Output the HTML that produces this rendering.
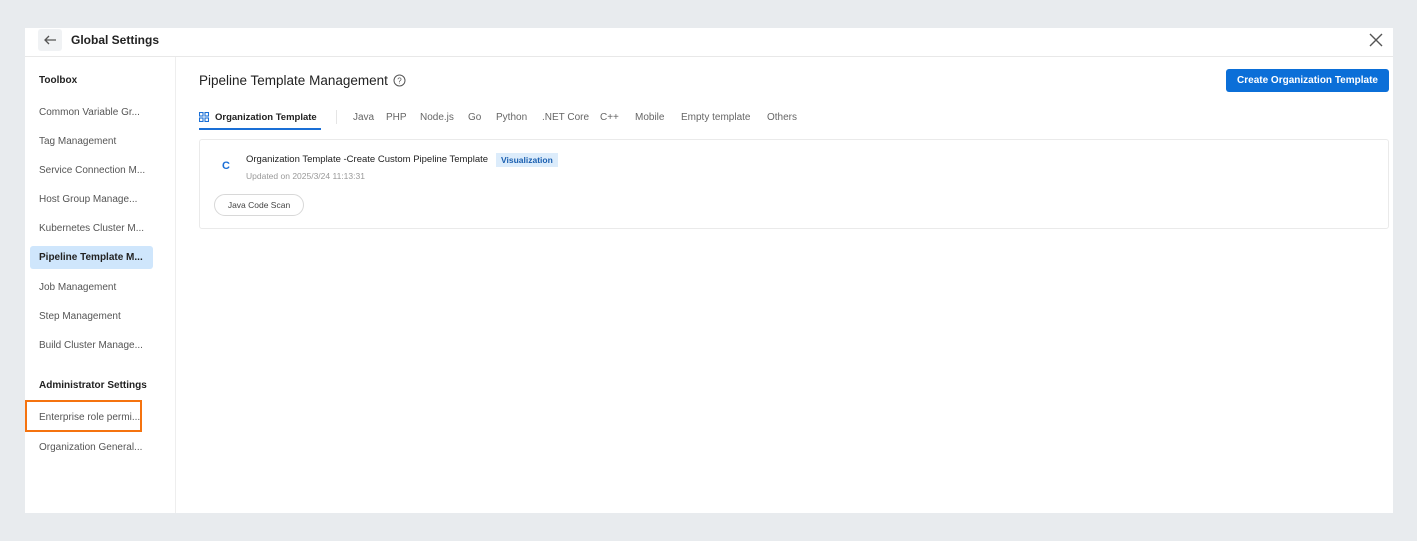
<!DOCTYPE html>
<html><head><style>
*{margin:0;padding:0;box-sizing:border-box}
body{width:1417px;height:541px;background:#e8ebee;font-family:"Liberation Sans",sans-serif;position:relative;overflow:hidden;color:#333}
.panel{position:absolute;left:25px;top:28px;width:1368px;height:485px;background:#fff}
.hdr{position:absolute;left:0;top:0;width:1368px;height:29px;border-bottom:1px solid #e8e8e8}
.back{position:absolute;left:13px;top:1px;width:24px;height:22px;background:#f0f2f4;border-radius:3px}
.t{position:absolute;white-space:nowrap}
.side{position:absolute;left:0;top:29px;width:151px;height:456px;border-right:1px solid #eee}
.si{position:absolute;left:14px;font-size:10px;color:#555;white-space:nowrap}
.sh{position:absolute;left:14px;font-size:10px;font-weight:bold;color:#222;white-space:nowrap}
.tab{position:absolute;top:84px;font-size:10px;color:#666;white-space:nowrap}
</style></head><body>
<div class="panel">
<div class="hdr">
<div class="back"><svg width="24" height="22"><path d="M18 11H7M11 7l-4 4 4 4" stroke="#555" stroke-width="1.3" fill="none"/></svg></div>
<div class="t" style="left:46px;top:5px;font-size:12px;font-weight:bold;color:#222">Global Settings</div>
<svg style="position:absolute;left:1344px;top:5px" width="14" height="14"><path d="M1 1L13 13M13 1L1 13" stroke="#555" stroke-width="1.4"/></svg>
</div>
<div class="side">
<div class="sh" style="top:18px">Toolbox</div>
<div class="si" style="top:50px">Common Variable Gr...</div>
<div class="si" style="top:79px">Tag Management</div>
<div class="si" style="top:108px">Service Connection M...</div>
<div class="si" style="top:137px">Host Group Manage...</div>
<div class="si" style="top:166px">Kubernetes Cluster M...</div>
<div style="position:absolute;left:5px;top:189px;width:123px;height:23px;background:#cfe6fc;border-radius:3px"></div>
<div class="sh" style="top:195px">Pipeline Template M...</div>
<div class="si" style="top:225px">Job Management</div>
<div class="si" style="top:254px">Step Management</div>
<div class="si" style="top:283px">Build Cluster Manage...</div>
<div class="sh" style="top:323px">Administrator Settings</div>
<div style="position:absolute;left:0;top:343px;width:117px;height:32px;border:2.5px solid #f5730f"></div>
<div class="si" style="top:355px">Enterprise role permi...</div>
<div class="si" style="top:385px">Organization General...</div>
</div>
<div class="t" style="left:174px;top:45px;font-size:13.5px;color:#222">Pipeline Template Management</div>
<svg style="position:absolute;left:368px;top:46px" width="13" height="13"><circle cx="6.5" cy="6.5" r="5.5" stroke="#555" fill="none"/><text x="6.5" y="9.5" font-size="8" text-anchor="middle" fill="#555" font-family="Liberation Sans">?</text></svg>
<div style="position:absolute;left:1201px;top:41px;width:163px;height:23px;background:#0b6fd8;border-radius:3px;color:#fff;font-size:10px;font-weight:bold;text-align:center;line-height:23px">Create Organization Template</div>
<svg style="position:absolute;left:174px;top:84px" width="10" height="10"><g stroke="#1a6fd6" fill="none" stroke-width="1.1"><rect x=".5" y=".5" width="3.5" height="3.5"/><rect x="6" y=".5" width="3.5" height="3.5"/><rect x=".5" y="6" width="3.5" height="3.5"/><rect x="6" y="6" width="3.5" height="3.5"/></g></svg>
<div class="tab" style="left:190px;color:#222;font-weight:bold;font-size:9.5px;top:84px">Organization Template</div>
<div style="position:absolute;left:174px;top:100px;width:122px;height:2px;background:#1a6fd6"></div>
<div style="position:absolute;left:311px;top:82px;width:1px;height:14px;background:#e5e5e5"></div>
<div class="tab" style="left:328px">Java</div>
<div class="tab" style="left:361px">PHP</div>
<div class="tab" style="left:395px">Node.js</div>
<div class="tab" style="left:443px">Go</div>
<div class="tab" style="left:471px">Python</div>
<div class="tab" style="left:517px">.NET Core</div>
<div class="tab" style="left:575px">C++</div>
<div class="tab" style="left:610px">Mobile</div>
<div class="tab" style="left:656px">Empty template</div>
<div class="tab" style="left:742px">Others</div>
<div style="position:absolute;left:174px;top:111px;width:1190px;height:90px;border:1px solid #eaeaea;border-radius:3px">
<div class="t" style="left:22px;top:20px;font-size:11px;font-weight:bold;color:#1a6fd6">C</div>
<div class="t" style="left:46px;top:14px;font-size:9.5px;color:#222">Organization Template -Create Custom Pipeline Template</div>
<div class="t" style="left:296px;top:13px;font-size:8.5px;color:#1a5fb0;background:#dcecfb;padding:2px 5px;font-weight:bold">Visualization</div>
<div class="t" style="left:46px;top:31px;font-size:8.5px;color:#999">Updated on 2025/3/24 11:13:31</div>
<div style="position:absolute;left:14px;top:54px;width:90px;height:22px;border:1px solid #d8d8d8;border-radius:11px;font-size:8.5px;color:#444;text-align:center;line-height:20px">Java Code Scan</div>
</div>
</div>
</body></html>
